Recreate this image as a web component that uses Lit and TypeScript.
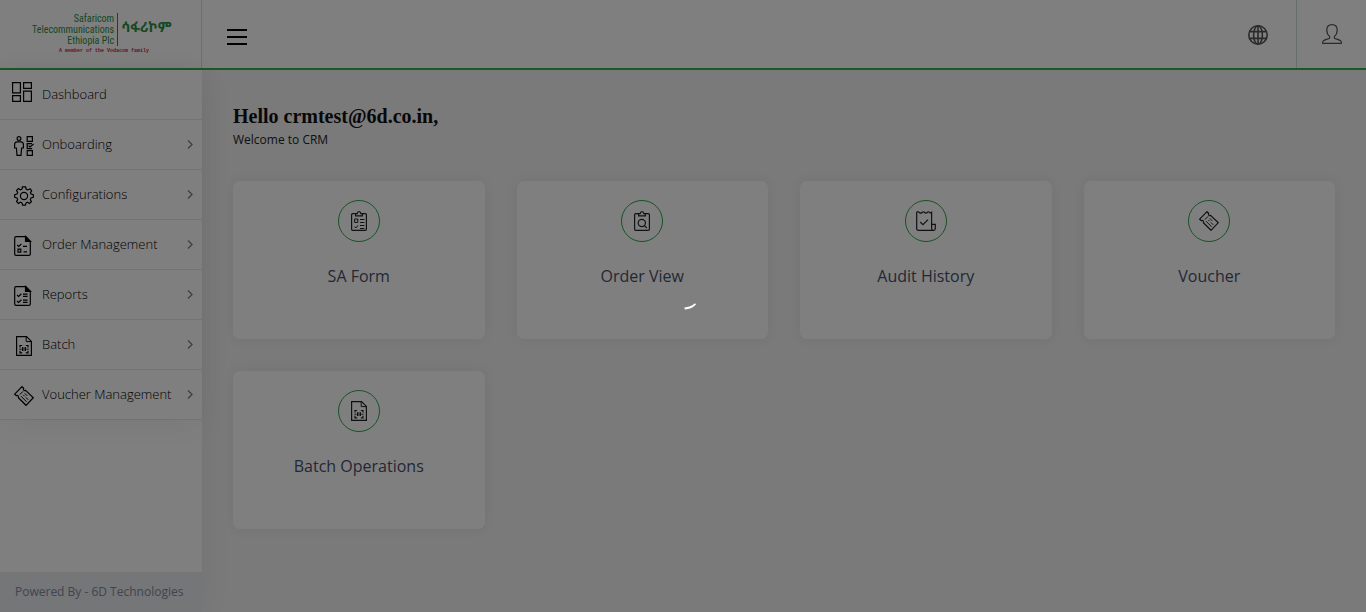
import { LitElement, html, css, svg, SVGTemplateResult } from "lit";
import { customElement } from "lit/decorators.js";

const batchIcon = svg`
  <path d="M2.6 .6H12.6L17.4 5.4V19.4H2.6Z"/>
  <path stroke-width="1" d="M12.2 .8V5.6H17.2"/>
  <path d="M6 11.5V9.5H8.2M11.8 9.5H14V11.5M14 14.8V16.8H11.8M8.2 16.8H6V14.8"/>
  <path class="fine" d="M8.5 11.2V15M10 11.2V15M11.5 11.2V15M5.4 13.2H7.6M12.4 13.2H14.6"/>`;

const voucherIcon = svg`
  <path d="M8 .7L9.6 2.2C9 3.6 10 5 11.6 4.4L19.3 11.7L12 19.3L4.4 11.8C5 10.2 3.8 9 2.4 9.7L.7 8.2Z"/>
  <path class="fine" d="M5.8 8.6L9 5.4M7 10.2L12.6 15.8M9.3 8.9L10.6 10.2M11.8 11.4L14.2 13.8M10.8 7.4L13.2 9.8"/>`;

const clipboard = svg`
  <path d="M6.5 2.6H3.8Q2.6 2.6 2.6 3.8V18.2Q2.6 19.4 3.8 19.4H16.2Q17.4 19.4 17.4 18.2V3.8Q17.4 2.6 16.2 2.6H13.5"/>
  <path d="M6.6 4.8V2.6H8.2Q8.4 .6 10 .6T11.8 2.6H13.4V4.8Z"/>`;

const page = svg`
  <path d="M11.8 .7H2Q.7 .7 .7 2V18Q.7 19.3 2 19.3H15Q16.3 19.3 16.3 18V5.4Z"/>
  <path class="solid" d="M11.5 .5V5.5H16.5Z"/>`;

const icons: Record<string, SVGTemplateResult> = {
  onboarding: svg`
    <circle cx="5" cy="2.5" r="1.9"/>
    <path d="M3 5.8H7Q9.4 6 9.4 8.4V12H7.6L7 19.4H3L2.4 12H.6V8.4Q.6 6 3 5.8Z"/>
    <path d="M13.2 .6H18.4V5.4H13.2ZM18.2 12.6H13.2V7.6H18M13.2 14.6H18.4V19.4H13.2ZM14.6 9.6L16 11L19.6 8"/>`,
  settings: svg`
    <circle cx="10" cy="10" r="3.6"/>
    <path d="M8.4 .9H11.6L12.2 3.2L13.9 3.9L16 2.7L17.7 4.8L16.5 6.6L17 8.1L19.3 8.8V11.3L17 12L16.3 13.6L17.4 15.6L15.5 17.4L13.6 16.2L12.1 16.9L11.5 19.2H8.6L8 16.9L6.4 16.2L4.4 17.4L2.5 15.5L3.7 13.6L3 12L.7 11.3V8.8L3 8.1L3.7 6.5L2.5 4.5L4.4 2.6L6.3 3.8L7.9 3.2Z"/>`,
  orders: svg`${page}<path d="M3.2 9L4.8 10.4L7.4 7.8M9 10.3H13M9.5 15.9H13M4 13.2H6.8V16.2H4Z"/>`,
  reports: svg`${page}<path d="M3 9L4.6 10.4L7.4 7.8M3 15L4.6 16.4L7.4 13.8M9 8.2H13.6M9 10.4H13.6M9 14.2H13.6M9 16.4H13.6"/>`,
  batch: batchIcon,
  voucher: voucherIcon,
  form: svg`${clipboard}<path class="fine" d="M5.6 8H8.8V11.4H5.6ZM11 8.5H15.4M11 11.5H15.4M5.4 15.6L6.8 17L9 14.4M11 14.5H15.4M11 17.5H15.4"/>`,
  search: svg`${clipboard}<circle cx="9.8" cy="12" r="3.6"/><path d="M12.4 14.6L14.8 17"/>`,
  audit: svg`
    <path d="M17.5 19.3H2.4Q.7 19.3 .7 17.4V1.4Q2 0 3.4 1.5Q4.7 2.8 6 1.5Q7.3 0 8.6 1.5Q9.9 2.8 11.2 1.5Q12.6 0 13.6 1.5Q14.6 2.4 15.6 1.4V17.5Q15.7 19.3 17.5 19.3Q19.3 19.3 19.3 17.5V13.3H15.6"/>
    <path d="M4.2 11L7 13.6L12 8.6"/>`,
};

interface Entry { label: string; icon: string }

const menu: Entry[] = [
  { label: "Onboarding", icon: "onboarding" },
  { label: "Configurations", icon: "settings" },
  { label: "Order Management", icon: "orders" },
  { label: "Reports", icon: "reports" },
  { label: "Batch", icon: "batch" },
  { label: "Voucher Management", icon: "voucher" },
];

const tiles: Entry[] = [
  { label: "SA Form", icon: "form" },
  { label: "Order View", icon: "search" },
  { label: "Audit History", icon: "audit" },
  { label: "Voucher", icon: "voucher" },
  { label: "Batch Operations", icon: "batch" },
];

@customElement("app-root")
export class AppRoot extends LitElement {
  static styles = css`
    :host {
      display: flex;
      flex-direction: column;
      min-height: 100vh;
      background: #f4f4f4;
      color: #222;
      font-family: "Open Sans", sans-serif;
      font-size: 13px;
    }
    * { box-sizing: border-box; }
    a { color: inherit; text-decoration: none; }
    button { border: 0; padding: 0; background: none; color: inherit; display: grid; place-items: center; }
    svg { display: block; fill: none; stroke: currentColor; stroke-width: 1.2; }
    .solid { fill: currentColor; }
    .fine { stroke-width: 1; }

    .top { display: flex; height: 70px; background: #fff; border-bottom: 2px solid #36b04f; }
    .brand {
      width: 202px; flex: none; border-right: 1px solid #d3e5df;
      display: flex; align-items: center; padding-left: 32px;
    }
    .logo { display: grid; grid-template-columns: auto auto; color: #2a8f43; }
    .company {
      font: 10px/11px "Roboto Condensed", Roboto, sans-serif;
      text-align: right; border-right: 1px solid #2a8f43; padding-right: 3px;
    }
    .amharic { font: bold 14px/28px "Noto Sans Ethiopic", "Noto Sans", sans-serif; padding-left: 3px; }
    .member { grid-column: 1 / 3; color: #c6303a; font: bold 5px/10px "Liberation Mono", monospace; padding-left: 27px; }
    .toggle { width: 20px; margin-left: 25px; color: #000; padding-top: 6px; }
    .tools { display: flex; margin-left: auto; color: #555; }
    .tool { width: 76px; padding-top: 2px; }
    .globe { stroke-width: 1.6; }
    .account { width: 70px; border-left: 1px solid #c8e0d6; }

    .body { display: flex; flex: 1; }
    .side {
      width: 202px; flex: none; display: flex; flex-direction: column;
      background: #fff; box-shadow: 0 0 28px rgba(60, 60, 70, .08);
    }
    .menu { list-style: none; margin: 0; padding: 0; box-shadow: 0 8px 28px rgba(60, 60, 70, .06); }
    .item {
      display: flex; align-items: center; gap: 6px; height: 50px;
      padding: 0 8px 0 12px; border-bottom: 1px solid #e6e6e6; font-weight: 300; color: #000;
    }
    .item .label { flex: 1; padding-bottom: 2px; white-space: nowrap; }
    .chevron { color: #76858a; stroke-width: 1.4; }
    .powered {
      margin-top: auto; height: 40px; padding-left: 15px; font-size: 12px; line-height: 40px;
      background: #eaecef; color: #7e8a9e;
    }

    .main { flex: 1; padding: 34px 31px 32px 31px; }
    .hello { margin: 0; font: bold 20px/24px "Liberation Serif", serif; color: #111; }
    .welcome { margin: 0 0 29px; font-size: 12px; line-height: 24px; }
    .tiles { display: grid; grid-template-columns: repeat(4, 1fr); gap: 32px; }
    .tile {
      height: 158px; padding-top: 19px; border-radius: 7px; background: #fff;
      box-shadow: 0 0 12px rgba(60, 60, 70, .08);
      display: flex; flex-direction: column; align-items: center; gap: 22px;
      font-size: 16px; line-height: 24px; color: #48506a;
    }
    .ring {
      width: 42px; height: 42px; border: 1px solid #2fa64a; border-radius: 50%;
      display: grid; place-items: center; color: #222;
    }
    .veil {
      position: fixed; inset: 0; background: rgba(0, 0, 0, .5);
      display: grid; place-items: center; color: #fff;
    }
  `;

  render() {
    return html`
      <header class="top">
        <a class="brand" href="#">
          <span class="logo">
            <span class="company">Safaricom<br>Telecommunications<br>Ethiopia Plc</span>
            <span class="amharic" lang="am">ሳፋሪኮም</span>
            <span class="member">A member of the Vodacom family</span>
          </span>
        </a>
        <button class="toggle" aria-label="Toggle menu">
          <svg width="20" height="16" viewBox="0 0 20 16"><path class="solid" stroke="none" d="M0 0H20V2H0ZM0 7H20V9H0ZM0 14H20V16H0Z"/></svg>
        </button>
        <div class="tools">
          <button class="tool" aria-label="Language">
            <svg class="globe" width="20" height="20" viewBox="0 0 20 20">
              <circle cx="10" cy="10" r="9.2"/><ellipse cx="10" cy="10" rx="4.4" ry="9.2"/>
              <path d="M10 .8V19.2M1.8 6.6H18.2M1.8 13.4H18.2"/>
            </svg>
          </button>
          <button class="account" aria-label="Account">
            <svg width="20" height="20" viewBox="0 0 20 20">
              <path d="M10 .7C6.7 .7 4.8 3 4.8 6.2C4.8 9 5.8 11 7.6 12.4V14.2C5 15.4 .7 16 .7 18V19.3H19.3V18C19.3 16 15 15.4 12.4 14.2V12.4C14.2 11 15.2 9 15.2 6.2C15.2 3 13.3 .7 10 .7Z"/>
            </svg>
          </button>
        </div>
      </header>
      <div class="body">
        <aside class="side">
          <nav aria-label="Main">
            <ul class="menu">
              <li>
                <a class="item" href="#">
                  <svg width="24" height="25" viewBox="0 0 24 25"><path d="M.6 .6H8.4V10.9H.6ZM11.6 .6H19.4V6.4H11.6ZM.6 13.6H8.4V19.4H.6ZM11.6 9.1H19.4V19.4H11.6Z"/></svg>
                  <span class="label">Dashboard</span>
                </a>
              </li>
              ${menu.map((m) => html`
                <li>
                  <a class="item" href="#">
                    <svg width="24" height="25" viewBox="0 0 24 25"><g transform="translate(2 4)">${icons[m.icon]}</g></svg>
                    <span class="label">${m.label}</span>
                    <svg class="chevron" width="8" height="12" viewBox="0 0 8 12"><path d="M2 1.5L6 5.5L2 9.5"/></svg>
                  </a>
                </li>`)}
            </ul>
          </nav>
          <div class="powered">Powered By - 6D Technologies</div>
        </aside>
        <main class="main">
          <h1 class="hello">Hello crmtest@6d.co.in,</h1>
          <p class="welcome">Welcome to CRM</p>
          <div class="tiles">
            ${tiles.map((t) => html`
              <a class="tile" href="#">
                <span class="ring"><svg width="20" height="20" viewBox="0 0 20 20">${icons[t.icon]}</svg></span>
                <span>${t.label}</span>
              </a>`)}
          </div>
        </main>
      </div>
      <div class="veil" role="status" aria-label="Loading">
        <svg width="30" height="30" viewBox="0 0 30 30">
          <path class="solid" stroke="none" d="M16.4 16.4Q22.4 16.2 27 12.2L28 13.4Q23.4 18.2 16.8 18.4Z"/>
        </svg>
      </div>
    `;
  }
}
